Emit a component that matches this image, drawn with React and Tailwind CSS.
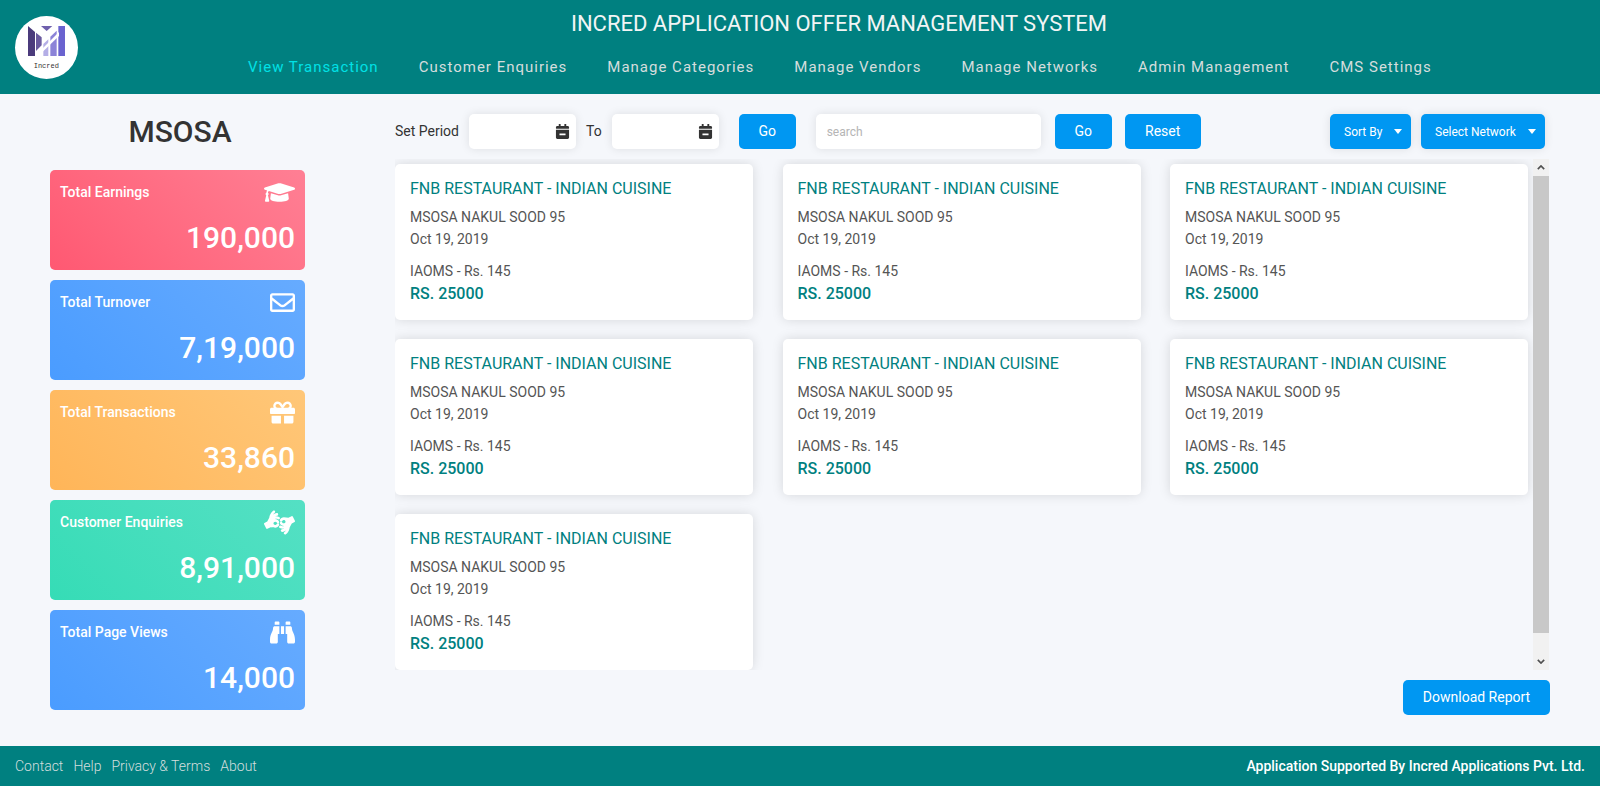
import { FaGraduationCap, FaRegEnvelope, FaGift, FaAmericanSignLanguageInterpreting, FaBinoculars, FaCalendarMinus } from "react-icons/fa";

const NAV = ["View Transaction", "Customer Enquiries", "Manage Categories", "Manage Vendors", "Manage Networks", "Admin Management", "CMS Settings"];

const STATS = [
  { label: "Total Earnings", value: "190,000", icon: FaGraduationCap, size: "text-[31px]", bg: "from-[#ff5872] to-[#ff7f94]" },
  { label: "Total Turnover", value: "7,19,000", icon: FaRegEnvelope, size: "text-[25px]", bg: "from-[#4a9cff] to-[#66abff]" },
  { label: "Total Transactions", value: "33,860", icon: FaGift, size: "text-[25px]", bg: "from-[#ffb558] to-[#ffc778]" },
  { label: "Customer Enquiries", value: "8,91,000", icon: FaAmericanSignLanguageInterpreting, size: "text-[31px]", bg: "from-[#35dcb6] to-[#54e0c4]" },
  { label: "Total Page Views", value: "14,000", icon: FaBinoculars, size: "text-[25px]", bg: "from-[#4a9cff] to-[#66abff]" },
];

const CARDS = [1, 2, 3, 4, 5, 6, 7];

function Logo() {
  return (
    <div className="h-[63px] w-[63px] shrink-0 rounded-full bg-white">
      <svg viewBox="0 0 189 189" className="h-full w-full">
        <polygon points="39,30 60,48 60,120 39,120" fill="#4b3b7c" />
        <polygon points="63,50 80,64 80,88 63,105 63,120" fill="#6a5a9f" />
        <polygon points="78,30 112,30 95,45" fill="#6f60ad" />
        <polygon points="85,84 100,70 100,120 85,120" fill="#b4aee6" />
        <polygon points="106,62 125,44 125,120 106,120" fill="#8c83d8" />
        <polygon points="130,30 150,30 150,120 130,120" fill="#6a63cf" />
        <polygon points="60,120 70,120 132,60 132,48" fill="#ffffff" />
        <text x="94" y="156" textAnchor="middle" fontSize="21" fontFamily="'Liberation Mono', monospace" fill="#333">Incred</text>
      </svg>
    </div>
  );
}

function Header() {
  return (
    <header className="flex h-[94px] shrink-0 bg-[#008080] pl-[15px] pt-[16px]">
      <Logo />
      <div className="ml-[170px] flex flex-1 flex-col">
        <h1 className="-mt-[14px] pr-[170px] text-center text-[22px] leading-[44px] text-[#f2f5f5]">INCRED APPLICATION OFFER MANAGEMENT SYSTEM</h1>
        <nav className="mt-[11px] flex gap-[40px]">
          {NAV.map((n, i) => (
            <a key={n} className={`text-[15px] leading-[20px] tracking-[1px] ${i === 0 ? "text-[#00e1e6]" : "text-[#d5dddd]"}`}>{n}</a>
          ))}
        </nav>
      </div>
    </header>
  );
}

function Sidebar() {
  return (
    <aside className="w-[395px] shrink-0 pl-[50px]">
      <div className="w-[255px]">
        <h2 className="pl-[5px] pt-[20px] text-center text-[30px] font-medium leading-[36px] text-[#333333]">MSOSA</h2>
        <div className="mt-[20px] flex flex-col gap-[10px]">
          {STATS.map((s) => {
            const Icon = s.icon;
            return (
              <div key={s.label} className={`h-[100px] rounded-[5px] bg-linear-45 px-[10px] pt-[12px] text-white ${s.bg}`}>
                <div className="flex h-[20px] items-center justify-between">
                  <span className="text-[14px] font-medium">{s.label}</span>
                  <Icon className={s.size} />
                </div>
                <div className="mt-[16px] text-right text-[30px] font-medium leading-[40px]">{s.value}</div>
              </div>
            );
          })}
        </div>
      </div>
    </aside>
  );
}

function DateInput({ className }) {
  return (
    <div className={`flex h-[35px] w-[107px] items-center justify-end rounded-[5px] bg-white pr-[6px] shadow-[0_0_10px_rgba(0,0,0,0.1)] ${className}`}>
      <FaCalendarMinus className="text-[15px] text-[#333333]" />
    </div>
  );
}

function Filters() {
  const btn = "flex h-[35px] items-center rounded-[5px] bg-[#0097f2] text-white";
  return (
    <div className="flex h-[35px] items-center text-[14px] text-[#333333]">
      <span>Set Period</span>
      <DateInput className="ml-[10px]" />
      <span className="ml-[10px]">To</span>
      <DateInput className="ml-[10px]" />
      <button className={`${btn} ml-[20px] w-[57px] justify-center text-[14px]`}>Go</button>
      <input placeholder="search" className="ml-[20px] h-[35px] w-[225px] rounded-[5px] bg-white px-[11px] text-[12px] shadow-[0_0_10px_rgba(0,0,0,0.1)] outline-none placeholder:text-[#b5b5b5]" />
      <button className={`${btn} ml-[14px] w-[57px] justify-center text-[14px]`}>Go</button>
      <button className={`${btn} ml-[13px] w-[76px] justify-center text-[14px]`}>Reset</button>
      <button className={`${btn} ml-auto w-[81px] gap-[12px] pl-[14px] text-[12px] shadow-[0_0_10px_rgba(0,0,0,0.1)]`}>
        Sort By
        <span className="h-0 w-0 border-x-[4.5px] border-t-[5px] border-x-transparent border-t-white" />
      </button>
      <button className={`${btn} ml-[10px] mr-[5px] w-[124px] gap-[12px] pl-[14px] text-[12px] shadow-[0_0_10px_rgba(0,0,0,0.1)]`}>
        Select Network
        <span className="h-0 w-0 border-x-[4.5px] border-t-[5px] border-x-transparent border-t-white" />
      </button>
    </div>
  );
}

function TxCard() {
  return (
    <div className="h-[156px] rounded-[5px] bg-white px-[15px] pt-[15px] shadow-[0_0_12px_rgba(0,0,0,0.13)]">
      <div className="text-[16px] leading-[20px] text-[#008080]">FNB RESTAURANT - INDIAN CUISINE</div>
      <div className="mt-[7px] text-[14px] leading-[22px] text-[#555555]">MSOSA NAKUL SOOD 95</div>
      <div className="text-[14px] leading-[22px] text-[#555555]">Oct 19, 2019</div>
      <div className="mt-[10px] text-[14px] leading-[22px] text-[#555555]">IAOMS - Rs. 145</div>
      <div className="mt-[1px] text-[16px] font-medium leading-[22px] text-[#008080]">RS. 25000</div>
    </div>
  );
}

function ScrollBar() {
  return (
    <div className="flex w-[16px] shrink-0 flex-col bg-[#f1f1f1]">
      <div className="flex h-[17px] items-center justify-center">
        <svg viewBox="0 0 10 6" className="h-[5px] w-[8px]"><path d="M1 5 5 1l4 4" fill="none" stroke="#505050" strokeWidth="2" /></svg>
      </div>
      <div className="h-[457px] bg-[#c8c8c8]" />
      <div className="mt-auto flex h-[17px] items-center justify-center">
        <svg viewBox="0 0 10 6" className="h-[5px] w-[8px]"><path d="M1 1l4 4 4-4" fill="none" stroke="#505050" strokeWidth="2" /></svg>
      </div>
    </div>
  );
}

function Footer() {
  return (
    <footer className="flex h-[40px] shrink-0 items-center justify-between bg-[#008080] px-[15px] text-[14px]">
      <div className="flex gap-[10px] font-light text-[#d3dede]">
        <a>Contact</a>
        <a>Help</a>
        <a>Privacy &amp; Terms</a>
        <a>About</a>
      </div>
      <div className="font-medium text-white">Application Supported By Incred Applications Pvt. Ltd.</div>
    </footer>
  );
}

export default function App() {
  return (
    <div className="flex h-screen flex-col overflow-hidden bg-[#f5f7fb] font-['Roboto',sans-serif]">
      <Header />
      <main className="flex flex-1">
        <Sidebar />
        <div className="flex-1 pr-[50px] pt-[20px]">
          <Filters />
          <div className="mt-[10px] flex h-[511px]">
            <div className="w-[1138px] overflow-hidden">
              <div className="grid w-[1133px] grid-cols-3 gap-x-[29.5px] gap-y-[19px] pt-[5px]">
                {CARDS.map((c) => (
                  <TxCard key={c} />
                ))}
              </div>
            </div>
            <ScrollBar />
          </div>
          <div className="mt-[10px] flex justify-end">
            <button className="flex h-[35px] w-[147px] items-center justify-center rounded-[5px] bg-[#0097f2] text-[14px] text-white">Download Report</button>
          </div>
        </div>
      </main>
      <Footer />
    </div>
  );
}
